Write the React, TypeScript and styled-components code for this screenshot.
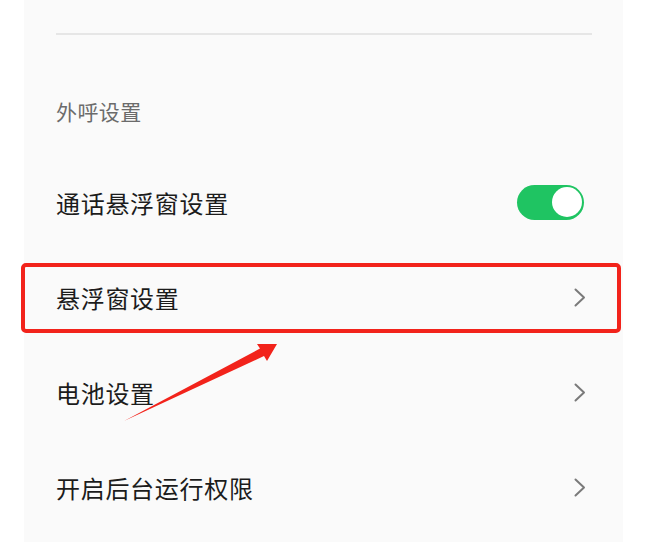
import React from "react";
import styled, { createGlobalStyle } from "styled-components";

const Global = createGlobalStyle`
  html, body { margin: 0; padding: 0; background: #ffffff; }
  body { font-family: "Noto Sans CJK SC", "Noto Sans", sans-serif; }
`;

const Page = styled.div`
  position: relative;
  width: 665px;
  height: 542px;
  overflow: hidden;
  background: #ffffff;
`;

const Panel = styled.div`
  margin-left: 24px;
  width: 599px;
  height: 542px;
  background: #fafafa;
  padding: 0 31px 0 32px;
  box-sizing: border-box;
  display: flex;
  flex-direction: column;
`;

const Divider = styled.div`
  margin-top: 33px;
  height: 1.5px;
  background: #e6e6e6;
`;

const SectionTitle = styled.div`
  height: 120px;
  display: flex;
  align-items: center;
  padding-top: 33px;
  box-sizing: border-box;
  font-size: 21px;
  color: #6b6b6b;
  letter-spacing: 0.4px;
`;

const Row = styled.div`
  height: 95px;
  display: flex;
  align-items: center;
  justify-content: space-between;
  padding-right: 6px;
`;

const Label = styled.span`
  font-size: 24px;
  color: #1c1c1c;
  letter-spacing: 0.7px;
`;

const Switch = styled.div<{ $on: boolean }>`
  width: 67px;
  height: 35px;
  border-radius: 18px;
  background: ${(p) => (p.$on ? "#1fc462" : "#d8d8d8")};
  display: flex;
  align-items: center;
  justify-content: ${(p) => (p.$on ? "flex-end" : "flex-start")};
  padding: 0 2.5px;
  box-sizing: border-box;
  margin-right: 2px;
`;

const Knob = styled.div`
  width: 30px;
  height: 30px;
  border-radius: 50%;
  background: #ffffff;
`;

const Highlight = styled.div`
  position: absolute;
  left: 21px;
  top: 263px;
  width: 600px;
  height: 70px;
  box-sizing: border-box;
  border: 4px solid #f2231b;
  border-radius: 5px;
  pointer-events: none;
`;

const ArrowLayer = styled.svg`
  position: absolute;
  left: 0;
  top: 0;
  pointer-events: none;
`;

const Chevron = () => (
  <svg width="12" height="19" viewBox="0 0 12 19">
    <path d="M1.5 1.5 L10 9.5 L1.5 17.5" fill="none" stroke="#7a7a7a" strokeWidth="2" strokeLinecap="round" strokeLinejoin="round" />
  </svg>
);

export default function App() {
  return (
    <Page>
      <Global />
      <Panel>
        <Divider />
        <SectionTitle>外呼设置</SectionTitle>
        <Row>
          <Label>通话悬浮窗设置</Label>
          <Switch $on>
            <Knob />
          </Switch>
        </Row>
        <Row>
          <Label>悬浮窗设置</Label>
          <Chevron />
        </Row>
        <Row>
          <Label>电池设置</Label>
          <Chevron />
        </Row>
        <Row>
          <Label>开启后台运行权限</Label>
          <Chevron />
        </Row>
      </Panel>
      <Highlight />
      <ArrowLayer width="665" height="542" viewBox="0 0 665 542">
        <polygon
          points="124,421 260,348.5 257,344 277,344 267,361 264,356"
          fill="#f2231b"
        />
      </ArrowLayer>
    </Page>
  );
}
